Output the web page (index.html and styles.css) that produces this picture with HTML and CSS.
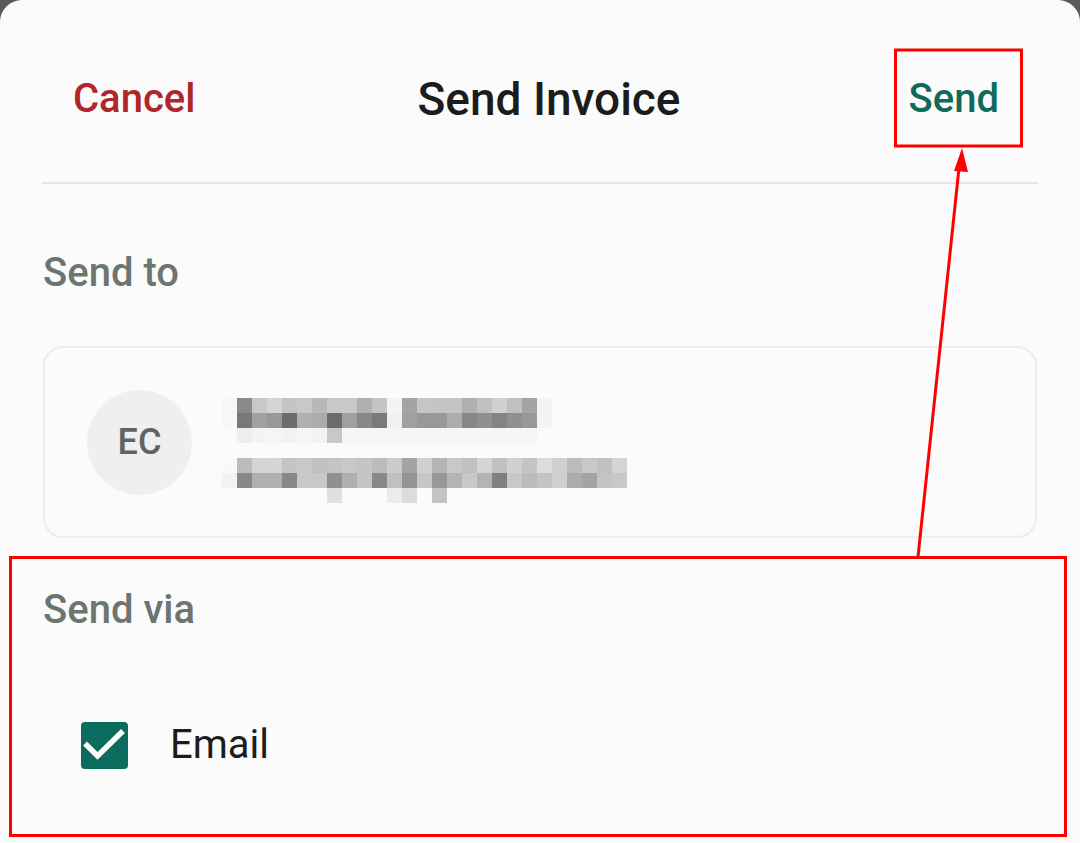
FILE: index.html
```html
<!DOCTYPE html>
<html lang="en">
  <head>
    <meta charset="UTF-8" />
    <meta name="viewport" content="width=device-width, initial-scale=1.0" />
    <title>Send Invoice</title>
    <link rel="stylesheet" href="styles.css">
  </head>
  <body>
    <div class="sheet">
      <header class="sheet-header">
        <button class="btn-text btn-cancel">Cancel</button>
        <h1 class="sheet-title">Send Invoice</h1>
        <button class="btn-text btn-send">Send</button>
      </header>

      <section class="section">
        <h2 class="section-label">Send to</h2>
        <div class="recipient-card">
          <div class="avatar">EC</div>
          <!-- name and email are pixelated for privacy -->
          <svg class="recipient-details" width="406" height="105" viewBox="0 0 406 105">
            <g class="row1">
              <rect x="0" y="0" width="15" height="15" fill="#f7f7f7"/>
              <rect x="15" y="0" width="15" height="15" fill="#8a8a8a"/>
              <rect x="30" y="0" width="15" height="15" fill="#c8c8c8"/>
              <rect x="45" y="0" width="15" height="15" fill="#d4d4d4"/>
              <rect x="60" y="0" width="15" height="15" fill="#c4c4c4"/>
              <rect x="75" y="0" width="15" height="15" fill="#c8c8c8"/>
              <rect x="90" y="0" width="15" height="15" fill="#b8b8b8"/>
              <rect x="105" y="0" width="15" height="15" fill="#c8c8c8"/>
              <rect x="120" y="0" width="15" height="15" fill="#c8c8c8"/>
              <rect x="135" y="0" width="15" height="15" fill="#b0b0b0"/>
              <rect x="150" y="0" width="15" height="15" fill="#c4c4c4"/>
              <rect x="165" y="0" width="15" height="15" fill="#f4f4f4"/>
              <rect x="180" y="0" width="15" height="15" fill="#a4a4a4"/>
              <rect x="195" y="0" width="15" height="15" fill="#c6c6c6"/>
              <rect x="210" y="0" width="15" height="15" fill="#c4c4c4"/>
              <rect x="225" y="0" width="15" height="15" fill="#c4c4c4"/>
              <rect x="240" y="0" width="15" height="15" fill="#b0b0b0"/>
              <rect x="255" y="0" width="15" height="15" fill="#c0c0c0"/>
              <rect x="270" y="0" width="15" height="15" fill="#d0d0d0"/>
              <rect x="285" y="0" width="15" height="15" fill="#c0c0c0"/>
              <rect x="300" y="0" width="15" height="15" fill="#a4a4a4"/>
              <rect x="315" y="0" width="15" height="15" fill="#f4f4f4"/>
            </g>
            <g class="row2">
              <rect x="0" y="15" width="15" height="15" fill="#f7f7f7"/>
              <rect x="15" y="15" width="15" height="15" fill="#787878"/>
              <rect x="30" y="15" width="15" height="15" fill="#a0a0a0"/>
              <rect x="45" y="15" width="15" height="15" fill="#989898"/>
              <rect x="60" y="15" width="15" height="15" fill="#6c6c6c"/>
              <rect x="75" y="15" width="15" height="15" fill="#b0b0b0"/>
              <rect x="90" y="15" width="15" height="15" fill="#acacac"/>
              <rect x="105" y="15" width="15" height="15" fill="#6c6c6c"/>
              <rect x="120" y="15" width="15" height="15" fill="#a0a0a0"/>
              <rect x="135" y="15" width="15" height="15" fill="#888888"/>
              <rect x="150" y="15" width="15" height="15" fill="#7a7a7a"/>
              <rect x="165" y="15" width="15" height="15" fill="#f0f0f0"/>
              <rect x="180" y="15" width="15" height="15" fill="#a0a0a0"/>
              <rect x="195" y="15" width="15" height="15" fill="#989898"/>
              <rect x="210" y="15" width="15" height="15" fill="#989898"/>
              <rect x="225" y="15" width="15" height="15" fill="#acacac"/>
              <rect x="240" y="15" width="15" height="15" fill="#888888"/>
              <rect x="255" y="15" width="15" height="15" fill="#909090"/>
              <rect x="270" y="15" width="15" height="15" fill="#848484"/>
              <rect x="285" y="15" width="15" height="15" fill="#909090"/>
              <rect x="300" y="15" width="15" height="15" fill="#989898"/>
              <rect x="315" y="15" width="15" height="15" fill="#f4f4f4"/>
            </g>
            <g class="row3">
              <rect x="15" y="30" width="15" height="15" fill="#eeeeee"/>
              <rect x="30" y="30" width="15" height="15" fill="#f4f4f4"/>
              <rect x="45" y="30" width="15" height="15" fill="#f5f5f5"/>
              <rect x="60" y="30" width="15" height="15" fill="#f2f2f2"/>
              <rect x="75" y="30" width="15" height="15" fill="#f6f6f6"/>
              <rect x="90" y="30" width="15" height="15" fill="#f4f4f4"/>
              <rect x="105" y="30" width="15" height="15" fill="#c8c8c8"/>
              <rect x="120" y="30" width="195" height="15" fill="#f6f6f6"/>
            </g>
            <g class="row5">
              <rect x="0" y="60" width="15" height="15" fill="#f9f9f9"/>
              <rect x="15" y="60" width="15" height="15" fill="#bcbcbc"/>
              <rect x="30" y="60" width="15" height="15" fill="#d4d4d4"/>
              <rect x="45" y="60" width="15" height="15" fill="#d5d5d5"/>
              <rect x="60" y="60" width="15" height="15" fill="#c4c4c4"/>
              <rect x="75" y="60" width="15" height="15" fill="#c8c8c8"/>
              <rect x="90" y="60" width="15" height="15" fill="#c0c0c0"/>
              <rect x="105" y="60" width="15" height="15" fill="#c4c4c4"/>
              <rect x="120" y="60" width="15" height="15" fill="#c8c8c8"/>
              <rect x="135" y="60" width="15" height="15" fill="#c4c4c4"/>
              <rect x="150" y="60" width="15" height="15" fill="#bcbcbc"/>
              <rect x="165" y="60" width="15" height="15" fill="#cccccc"/>
              <rect x="180" y="60" width="15" height="15" fill="#a4a4a4"/>
              <rect x="195" y="60" width="15" height="15" fill="#d0d0d0"/>
              <rect x="210" y="60" width="15" height="15" fill="#b4b4b4"/>
              <rect x="225" y="60" width="15" height="15" fill="#c8c8c8"/>
              <rect x="240" y="60" width="15" height="15" fill="#c0c0c0"/>
              <rect x="255" y="60" width="15" height="15" fill="#d4d4d4"/>
              <rect x="270" y="60" width="15" height="15" fill="#c0c0c0"/>
              <rect x="285" y="60" width="15" height="15" fill="#d0d0d0"/>
              <rect x="300" y="60" width="15" height="15" fill="#c4c4c4"/>
              <rect x="315" y="60" width="15" height="15" fill="#dcdcdc"/>
              <rect x="330" y="60" width="15" height="15" fill="#d0d0d0"/>
              <rect x="345" y="60" width="15" height="15" fill="#bcbcbc"/>
              <rect x="360" y="60" width="15" height="15" fill="#c8c8c8"/>
              <rect x="375" y="60" width="15" height="15" fill="#c0c0c0"/>
              <rect x="390" y="60" width="15" height="15" fill="#d4d4d4"/>
            </g>
            <g class="row6">
              <rect x="0" y="75" width="15" height="15" fill="#f2f2f2"/>
              <rect x="15" y="75" width="15" height="15" fill="#888888"/>
              <rect x="30" y="75" width="15" height="15" fill="#b0b0b0"/>
              <rect x="45" y="75" width="15" height="15" fill="#b0b0b0"/>
              <rect x="60" y="75" width="15" height="15" fill="#888888"/>
              <rect x="75" y="75" width="15" height="15" fill="#c8c8c8"/>
              <rect x="90" y="75" width="15" height="15" fill="#c8c8c8"/>
              <rect x="105" y="75" width="15" height="15" fill="#909090"/>
              <rect x="120" y="75" width="15" height="15" fill="#b0b0b0"/>
              <rect x="135" y="75" width="15" height="15" fill="#c4c4c4"/>
              <rect x="150" y="75" width="15" height="15" fill="#888888"/>
              <rect x="165" y="75" width="15" height="15" fill="#c0c0c0"/>
              <rect x="180" y="75" width="15" height="15" fill="#949494"/>
              <rect x="195" y="75" width="15" height="15" fill="#c6c6c6"/>
              <rect x="210" y="75" width="15" height="15" fill="#989898"/>
              <rect x="225" y="75" width="15" height="15" fill="#b4b4b4"/>
              <rect x="240" y="75" width="15" height="15" fill="#c8c8c8"/>
              <rect x="255" y="75" width="15" height="15" fill="#b4b4b4"/>
              <rect x="270" y="75" width="15" height="15" fill="#808080"/>
              <rect x="285" y="75" width="15" height="15" fill="#c8c8c8"/>
              <rect x="300" y="75" width="15" height="15" fill="#bcbcbc"/>
              <rect x="315" y="75" width="15" height="15" fill="#c4c4c4"/>
              <rect x="330" y="75" width="15" height="15" fill="#d0d0d0"/>
              <rect x="345" y="75" width="15" height="15" fill="#acacac"/>
              <rect x="360" y="75" width="15" height="15" fill="#a4a4a4"/>
              <rect x="375" y="75" width="15" height="15" fill="#c4c4c4"/>
              <rect x="390" y="75" width="15" height="15" fill="#c8c8c8"/>
            </g>
            <g class="row7">
              <rect x="105" y="90" width="15" height="15" fill="#e0e0e0"/>
              <rect x="165" y="90" width="15" height="15" fill="#ececec"/>
              <rect x="180" y="90" width="15" height="15" fill="#dcdcdc"/>
              <rect x="210" y="90" width="15" height="15" fill="#c4c4c4"/>
            </g>
          </svg>
        </div>
      </section>

      <section class="section">
        <h2 class="section-label section-label-via">Send via</h2>
        <label class="option-row">
          <span class="checkbox">
            <svg width="47" height="47" viewBox="0 0 47 47">
              <path d="M6 23.5 L16.5 34 L40 11" fill="none" stroke="#fff" stroke-width="5.5" stroke-linecap="square"/>
            </svg>
          </span>
          <span class="option-text">Email</span>
        </label>
      </section>
    </div>

    <!-- highlight boxes drawn over the sheet -->
    <svg class="annotations" width="1080" height="843" viewBox="0 0 1080 843">
      <rect x="895.5" y="50" width="126" height="96" fill="none" stroke="#ff0000" stroke-width="3"/>
      <rect x="10.5" y="557.5" width="1055" height="278" fill="none" stroke="#ff0000" stroke-width="3"/>
      <line x1="918" y1="557" x2="959" y2="168" stroke="#ff0000" stroke-width="3"/>
      <polygon points="962,148 954,171 968,172" fill="#ff0000"/>
    </svg>
  </body>
</html>
```

FILE: styles.css
```css
body {
  margin: 0;
  padding: 0;
  background-color: #5a5a5a;
  font-family: "Roboto", "Noto Sans", sans-serif;
  overflow: hidden;
}

.sheet {
  min-height: 100vh;
  background-color: #fafbfa;
  border-radius: 22px 22px 0 0;
}

.sheet-header {
  display: flex;
  justify-content: space-between;
  align-items: center;
  box-sizing: border-box;
  height: 184px;
  margin: 0 42px;
  padding: 16px 39px 0 31px;
  border-bottom: 2px solid #e3e4e3;
}

.btn-text {
  padding: 0;
  border: none;
  background: none;
  font-family: inherit;
  font-size: 40px;
  font-weight: 500;
  line-height: 48px;
  cursor: pointer;
}

.btn-cancel {
  color: #b0262a;
}

.btn-send {
  color: #0e6a5d;
}

.sheet-title {
  margin: 0 0 0 -6px;
  font-size: 46px;
  font-weight: 500;
  line-height: 52px;
  color: #1b1c1b;
}

.section {
  padding: 0 43px;
}

.section-label {
  margin: 66px 0 0;
  font-size: 40px;
  font-weight: 500;
  line-height: 46px;
  color: #6d7571;
}

.section-label-via {
  margin-top: 49px;
}

.recipient-card {
  display: flex;
  align-items: center;
  gap: 30px;
  box-sizing: border-box;
  height: 192px;
  margin-top: 50px;
  padding-left: 42px;
  border: 2px solid #ededed;
  border-radius: 20px;
}

.avatar {
  display: flex;
  justify-content: center;
  align-items: center;
  width: 105px;
  height: 105px;
  border-radius: 50%;
  background-color: #efefef;
  color: #5e6562;
  font-size: 36px;
  font-weight: 500;
}

.recipient-details {
  display: block;
  margin-top: 16px;
}

.option-row {
  display: flex;
  align-items: center;
  gap: 42px;
  margin-top: 88px;
  padding-left: 38px;
  cursor: pointer;
}

.checkbox {
  display: block;
  width: 47px;
  height: 47px;
  border-radius: 4px;
  background-color: #0b6b5c;
}

.checkbox svg {
  display: block;
}

.option-text {
  font-size: 40px;
  line-height: 48px;
  color: #1c1c1c;
}

.annotations {
  position: absolute;
  top: 0;
  left: 0;
  pointer-events: none;
}
```
